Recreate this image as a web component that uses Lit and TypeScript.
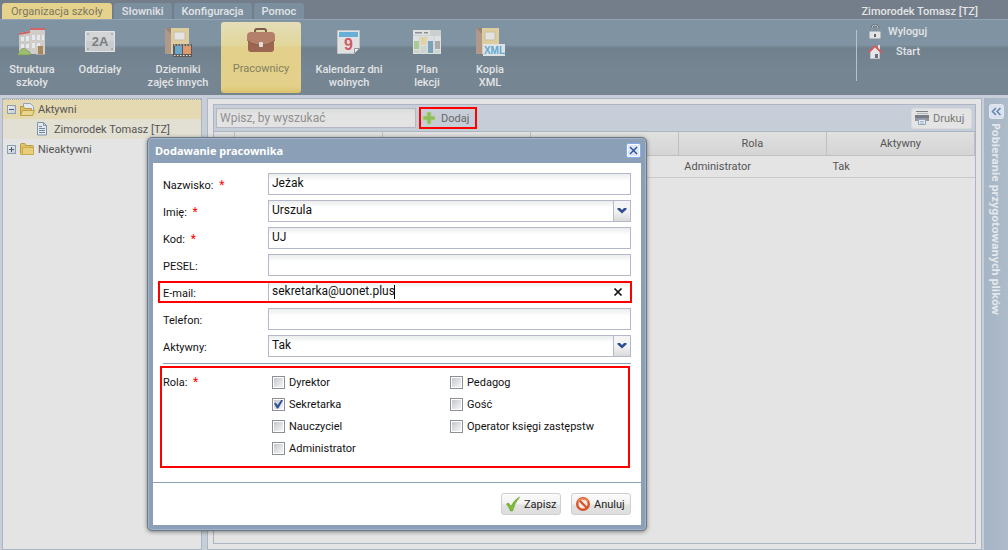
import { LitElement, html, svg, css, nothing } from "lit";
import { customElement, property, state } from "lit/decorators.js";
import { classMap } from "lit/directives/class-map.js";

const icons: Record<string, unknown> = {
  school: svg`<svg width="30" height="30" viewBox="0 0 30 30">
    <path d="M2 6 13 4V27H2Z" fill="#cbc9c4"/><path d="M13 3h15v24H13Z" fill="#d0cdc8"/>
    <path d="M2 6 13 4V6L2 8ZM13 1h15v2H13Z" fill="#cf6469"/>
    <g fill="#e4eaf0"><path d="M4 10h3v4H4zM9 9h3v5H9zM15 8h3v5h-3zM20 8h3v5h-3zM25 8h2v5h-2zM4 17h3v4H4zM9 17h3v4H9zM15 16h3v5h-3zM20 16h3v3h-3z"/></g>
    <path d="M21 19h5v8h-5Z" fill="#a8875f"/><path d="M19 27h9v1h-9Z" fill="#a8a49d"/>
    <path d="M1 28c0-3 2-3 3-5 2-3 6-1 6 1 3 0 4 2 3 4Z" fill="#9dbd70" stroke="#7a9659" stroke-width=".7"/></svg>`,
  plate: svg`<svg width="30" height="30" viewBox="0 0 30 30">
    <path d="M.5 4.500h29v20H.5Z" fill="#d3d5d6" stroke="#e2e4e5"/><path d="M1 14h28v10H1Z" fill="#c9cbcc"/>
    <g fill="#8a8d8f"><circle cx="3" cy="7" r=".8"/><circle cx="27" cy="7" r=".8"/><circle cx="3" cy="22" r=".8"/><circle cx="27" cy="22" r=".8"/></g>
    <text x="15" y="19" text-anchor="middle" font-family="Liberation Sans, sans-serif" font-weight="700" font-size="13" fill="#7c8082">2A</text></svg>`,
  journal: svg`<svg width="30" height="30" viewBox="0 0 30 30">
    <path d="M2 1h6v26H2Z" fill="#9b8578"/><path d="M2 1 8 7V27H2Z" fill="#b0998b"/><path d="M8 1h18v26H8Z" fill="#ddcd9f"/>
    <path d="M11 5h11v8H11Z" fill="#e3e3e3" stroke="#cbbf9f"/>
    <path d="M10 17h19v13H10Z" fill="#5e5a57"/><path d="M12 19h7v8h-7Z" fill="#66a9cd"/><path d="M20 19h8v8h-8Z" fill="#de9a6c"/>
    <path d="M11 18h17M11 28.500h17" stroke="#e2e2e2" stroke-dasharray="1.500 1.500"/></svg>`,
  briefcase: svg`<svg width="30" height="30" viewBox="0 0 30 30">
    <path d="M9 6V4q0-2 2-2h7q2 0 2 2V6" fill="none" stroke="#7d5b4c" stroke-width="2"/>
    <rect x="2" y="6" width="26" height="19" rx="3" fill="#9b6752"/>
    <path d="M1 9q0-4 4-4h20q4 0 4 4v4q-5 5-14 5T1 13Z" fill="#b5806a"/><path d="M1 13q5 5 14 5t14-5" fill="none" stroke="#83523f" stroke-width=".7"/>
    <rect x="13" y="15" width="4" height="5" rx="1" fill="#e0ded9"/></svg>`,
  calendar: svg`<svg width="30" height="30" viewBox="0 0 30 30">
    <path d="M3.500 3.500h22v18l-5 5h-17Z" fill="#e1e1e1" stroke="#c0c4c7"/><path d="M5 5h19v5H5Z" fill="#69aed6"/>
    <path d="M25.500 21.500h-5v5Z" fill="#f0f0f0" stroke="#8b959d"/>
    <text x="14.500" y="23" text-anchor="middle" font-family="Liberation Sans, sans-serif" font-weight="700" font-size="16" fill="#cf5b66">9</text></svg>`,
  plan: svg`<svg width="30" height="30" viewBox="0 0 30 30">
    <path d="M1 3h28v24H1Z" fill="#dfe1e1"/><path d="M3 5h7v1.500H3zM12 5h4v1.500h-4z" fill="#8d8f90"/><path d="M18 3h11v5H18z" fill="#cbd0cf"/>
    <path d="M2 14h5v8H2z" fill="#a8cb93"/><path d="M9 10h5v8H9z" fill="#e4d19b"/><path d="M16 14h5v12h-5z" fill="#7aa3b9"/><path d="M23 14h5v8h-5z" fill="#a9abab"/><path d="M23 23h5v3h-5zM2 23h5v3H2zM9 19h5v7H9z" fill="#cdd5d0"/>
    <path d="M1 8.500h28M8 9v18M15 9v18M22 9v18" stroke="#c4cacb" stroke-width=".7"/></svg>`,
  xml: svg`<svg width="30" height="30" viewBox="0 0 30 30">
    <path d="M1 1h6v26H1Z" fill="#9b8578"/><path d="M1 1 7 7V27H1Z" fill="#b0998b"/><path d="M7 1h17v26H7Z" fill="#ddcd9f"/>
    <path d="M10 5h10v8H10Z" fill="#e3e3e3" stroke="#cbbf9f"/><path d="M8 17h22v12H8Z" fill="#dfe2e4"/>
    <text x="19.500" y="26.500" text-anchor="middle" font-family="Liberation Sans, sans-serif" font-weight="700" font-size="10" fill="#5fa9d4">XML</text></svg>`,
  lock: svg`<svg width="14" height="16" viewBox="0 0 14 16"><path d="M4 8V4a3 3 0 0 1 6 0v4" fill="none" stroke="#5f6d79" stroke-width="2.400"/><path d="M4 8V4a3 3 0 0 1 6 0v4" fill="none" stroke="#bfc5ca"/><rect x="1.500" y="7.500" width="11" height="7" rx="1" fill="#e4e4e4" stroke="#b5bac0"/><path d="M6 10h2v3H6z" fill="#5c6670"/></svg>`,
  home: svg`<svg width="14" height="16" viewBox="0 0 14 16"><path d="M2.500 7.500 7 3l4.500 4.500v7h-9Z" fill="#e6e6e6" stroke="#c2c5c8"/><path d="M10 1h2v5h-2z" fill="#e0e0e0"/><path d="M.5 8.500 7 2l6.500 6.500" fill="none" stroke="#d7595c" stroke-width="1.800"/><path d="M7 10h3v4H7z" fill="#65727d"/></svg>`,
  folderOpen: svg`<svg width="16" height="16" viewBox="0 0 16 16"><path d="M4.500 1.500h7l3 3v6h-10Z" fill="#e3e8ee" stroke="#8da4bc"/><path d="M1.500 4.500h3l1 2h7v7h-11Z" fill="#dcbf68" stroke="#b99a44"/><path d="M3.500 8.500h12l-2 5h-12Z" fill="#e9d68e" stroke="#bf9f47"/></svg>`,
  folder: svg`<svg width="16" height="16" viewBox="0 0 16 16"><path d="M1.500 3.500q0-1 1-1h3q1 0 1 1v1h7q1 0 1 1v7q0 1-1 1h-11q-1 0-1-1Z" fill="#e0c365" stroke="#bb9a42"/><path d="M3.500 6.500h11v7h-11Z" fill="#e6cf78" stroke="#c9aa4d"/></svg>`,
  doc: svg`<svg width="16" height="16" viewBox="0 0 16 16"><path d="M3.500 1.500h6l3 3v9.500h-9Z" fill="#e4e9ee" stroke="#7f93aa"/><path d="M9.500 1.500v3h3" fill="none" stroke="#7f93aa"/><path d="M5 5.500h3M5 7.500h6M5 9.500h6M5 11.500h6" stroke="#6f86a0"/></svg>`,
  plus: svg`<svg width="14" height="14" viewBox="0 0 14 14"><path d="M5 1h4v4h4v4H9v4H5V9H1V5h4Z" fill="#8fbf5a" stroke="#b4d291" stroke-width=".8"/></svg>`,
  printer: svg`<svg width="16" height="16" viewBox="0 0 16 16"><path d="M2 1.500h12" stroke="#7d8388"/><path d="M3 3.500h11" stroke="#b5b9bd"/><path d="M1 5h14v6H1Z" fill="#787d82"/><path d="M1 8h14v3H1Z" fill="#92969b"/><path d="M4.500 9.500h7v5h-7Z" fill="#e6ebf0" stroke="#8fa6bd"/><path d="M6 11.500h4M6 13h4" stroke="#a9bacb"/></svg>`,
  check: svg`<svg width="16" height="16" viewBox="0 0 16 16"><path d="M1.500 8 3.500 7 6 10.500Q9 4 14.500 1 9.500 7 7.500 15H5.500Q4 11 1.500 8Z" fill="#7cbd32" stroke="#5f9e22" stroke-width=".6"/></svg>`,
  ban: svg`<svg width="16" height="16" viewBox="0 0 16 16"><circle cx="8" cy="8" r="5.800" fill="#f4ece6" stroke="#d9542a" stroke-width="2.400"/><path d="M4 4l8 8" stroke="#d9542a" stroke-width="2.400"/><path d="M3 5.500A5.800 5.800 0 0 1 13 5.500" fill="none" stroke="#ef8a5f" stroke-width="1.500"/></svg>`,
  close: svg`<svg width="15" height="15" viewBox="0 0 15 15"><rect x=".5" y=".5" width="14" height="14" rx="2" fill="#dbe8fb" stroke="#84aef0"/><rect x="1.500" y="1.500" width="12" height="12" rx="1" fill="none" stroke="#fff"/><path d="M4 4l7 7M11 4l-7 7" stroke="#2f4d97" stroke-width="1.400"/></svg>`,
  clear: svg`<svg width="10" height="10" viewBox="0 0 10 10"><path d="M1.500 1.500l7 7M8.500 1.500l-7 7" stroke="#111" stroke-width="1.700"/></svg>`,
  chevron: svg`<svg width="16" height="20" viewBox="0 0 16 20"><path d="M3.500 7h2.500l2 2 2-2h2.500v1.500L8 12.500 3.500 8.500Z" fill="#2e5090"/></svg>`,
  expand: svg`<svg width="15" height="15" viewBox="0 0 15 15"><rect x=".5" y=".5" width="14" height="14" rx="2" fill="#d9e2ee" stroke="#e2e7ec"/><path d="M7 4 3.500 7.500 7 11M11.500 4 8 7.500l3.500 3.500" fill="none" stroke="#6484ab" stroke-width="1.500"/></svg>`,
};

const base = css`
  :host { display: block; font: 11px/13px Roboto, "Open Sans", sans-serif; }
  * { box-sizing: border-box; }
  button, input, select { font: inherit; color: inherit; margin: 0; }
  button { border: 0; padding: 0; background: none; cursor: pointer; }
  svg { display: block; flex: none; }
`;

@customElement("ribbon-bar")
class RibbonBar extends LitElement {
  static styles = [base, css`
    :host { color: #e2e4e6; }
    .top { height: 19px; display: flex; align-items: flex-end; gap: 2px; padding: 0 30px 0 2px; background: #737e8a; }
    .tab { height: 16px; padding: 0 8px; border-radius: 3px 3px 0 0; background: #7b8f9f; font-weight: 500; white-space: nowrap; }
    .tab.on { padding: 0 9px; background: #e4d28d; color: #7d7760; font-weight: 400; }
    .user { margin-left: auto; align-self: center; padding-top: 3px; font-weight: 500; white-space: nowrap; }
    .ribbon { display: flex; gap: 3px; padding: 2px 0 2px 2px; height: 76px; border-top: 1px solid #93a3b1; background: linear-gradient(#7f93a2 0 25px, #70808c 28px, #758592 50px, #758592); }
    .item { width: 60px; display: flex; flex-direction: column; align-items: center; gap: 6px; padding-top: 5px; text-align: center; border-radius: 3px; font-weight: 500; }
    .item.w70 { width: 70px; }
    .item.w80 { width: 80px; }
    .item.w90 { width: 90px; }
    .item.on { gap: 5px; color: #84805f; background: linear-gradient(#e4ddb9, #e2d699 24px, #e3d08a 25px, #e3d08a 64px, #ddc36a); font-weight: 400; }
    .sep { margin: 8px 0 12px auto; width: 1px; background: #b9c2ca; }
    .links { width: 148px; display: grid; grid-template-columns: 14px auto; align-content: start; gap: 4px 6px; padding: 2px 0 0 8px; }
    .link { display: contents; color: inherit; text-decoration: none; font-weight: 500; }
    .link span { line-height: 16px; }
    .link.sub span { padding-left: 8px; }
  `];
  items = [
    { icon: "school", a: "Struktura", b: "szkoły", w: 60 },
    { icon: "plate", a: "Oddziały", b: "", w: 70 },
    { icon: "journal", a: "Dzienniki", b: "zajęć innych", w: 80 },
    { icon: "briefcase", a: "Pracownicy", b: "", w: 80, on: true },
    { icon: "calendar", a: "Kalendarz dni", b: "wolnych", w: 90 },
    { icon: "plan", a: "Plan", b: "lekcji", w: 60 },
    { icon: "xml", a: "Kopia", b: "XML", w: 60 },
  ];
  render() {
    return html`
      <nav class="top">
        ${["Organizacja szkoły", "Słowniki", "Konfiguracja", "Pomoc"].map((t, i) => html`<button class=${classMap({ tab: true, on: i === 0 })}>${t}</button>`)}
        <span class="user">Zimorodek Tomasz [TZ]</span>
      </nav>
      <div class="ribbon">
        ${this.items.map((i) => html`<button class=${classMap({ item: true, on: !!i.on, [`w${i.w}`]: true })}>${icons[i.icon]}<span>${i.a}${i.b ? html`<br />${i.b}` : nothing}</span></button>`)}
        <span class="sep"></span>
        <div class="links">
          <a class="link" href="#">${icons.lock}<span>Wyloguj</span></a>
          <a class="link sub" href="#">${icons.home}<span>Start</span></a>
        </div>
      </div>`;
  }
}

@customElement("staff-tree")
class StaffTree extends LitElement {
  static styles = [base, css`
    :host { border: 1px solid #aab6c3; background: #e4e4e4; color: #555; }
    ul { list-style: none; margin: 0; padding: 0; }
    .row { height: 20px; display: flex; align-items: center; gap: 3px; padding-left: 4px; }
    .row.sel { background: #e4d9b0; border-top: 1px dotted #aaa; }
    .row.child { background: #e2e0d3; padding-left: 31px; gap: 4px; }
    .box { width: 9px; height: 9px; border: 1px solid #8d9db4; background: linear-gradient(135deg, #eee, #c8ccd2); display: grid; place-items: center; }
    .box i { grid-area: 1 / 1; width: 5px; height: 1px; background: #4a5a78; }
    .box i.v { width: 1px; height: 5px; }
  `];
  render() {
    return html`<ul>
      <li><div class="row sel"><button class="box" aria-label="Aktywni"><i></i></button>${icons.folderOpen}<span>Aktywni</span></div>
        <ul><li class="row child">${icons.doc}<span>Zimorodek Tomasz [TZ]</span></li></ul></li>
      <li class="row"><button class="box" aria-label="Nieaktywni"><i></i><i class="v"></i></button>${icons.folder}<span>Nieaktywni</span></li>
    </ul>`;
  }
}

@customElement("staff-grid")
class StaffGrid extends LitElement {
  static styles = [base, css`
    :host { border: 1px solid #aab6c3; background: #e4e4e4; padding: 5px; color: #555; display: flex; }
    .panel { flex: 1; border: 1px solid #aab6c3; }
    .bar { display: flex; align-items: center; height: 27px; gap: 3px; padding: 0 3px 0 2px; background: linear-gradient(#c9ced9, #c5cdd7); border-bottom: 1px solid #aab6c3; }
    .search { width: 200px; height: 20px; border: 1px solid #b4b9c2; background: linear-gradient(#dadddd, #e3e3e3 6px); padding: 0 3px; font-size: 12px; }
    .search::placeholder { color: #8f8f8f; opacity: 1; }
    .add { display: flex; align-items: center; gap: 5px; height: 22px; width: 58px; padding: 0 1px; border: 2px solid #f00; color: #666; }
    .print { margin-left: auto; display: flex; align-items: center; gap: 3px; height: 21px; width: 61px; padding: 0 2px; border: 1px solid #d8dadc; border-radius: 3px; background: #e4e4e4; color: #777; }
    table { width: 100%; table-layout: fixed; border-collapse: collapse; }
    th { height: 23px; padding: 0; font-weight: 400; border-right: 1px solid #bfbfbf; border-bottom: 1px solid #bfbfbf; background: linear-gradient(#e0e0e0, #d4d4d4); }
    td { height: 22px; padding: 0 6px; border-bottom: 1px solid #c8c8c8; }
    .num { width: 20px; }
  `];
  render() {
    return html`<section class="panel">
      <div class="bar">
        <input class="search" type="search" placeholder="Wpisz, by wyszukać" aria-label="Wpisz, by wyszukać" />
        <button class="add">${icons.plus}Dodaj</button>
        <button class="print">${icons.printer}Drukuj</button>
      </div>
      <table>
        <thead><tr><th class="num"></th><th></th><th></th><th></th><th>Rola</th><th>Aktywny</th></tr></thead>
        <tbody><tr><td></td><td></td><td></td><td></td><td>Administrator</td><td>Tak</td></tr></tbody>
      </table>
    </section>`;
  }
}

@customElement("staff-dialog")
class StaffDialog extends LitElement {
  static styles = [base, css`
    :host { width: 500px; border: 1px solid #6c7885; border-radius: 5px; background: #8ba0b6; padding: 0 5px 5px; box-shadow: 0 1px 4px rgba(0, 0, 0, .45), inset 0 0 0 1px #a3b5c8; color: #111; }
    .title { display: flex; align-items: center; justify-content: space-between; height: 25px; padding: 0 0 1px 2px; color: #fff; font: 700 11px/15px "Noto Sans", sans-serif; }
    h2 { margin: 0; font: inherit; }
    form { background: #fff; }
    .fields { padding: 10px 9px 0 5px; display: grid; gap: 5px; }
    .field { display: flex; align-items: center; height: 22px; padding: 0 1px 0 5px; position: relative; }
    .field > label { width: 105px; padding-top: 2px; }
    .field.mark::after { content: ""; position: absolute; inset: 0; border: 2px solid #f00; pointer-events: none; }
    .req { color: #f00; margin-left: 3px; font-size: 12px; }
    .control { flex: 1; position: relative; display: flex; height: 22px; border: 1px solid #b5b8c8; background: linear-gradient(#eaeeed, #fff 7px); }
    .text { flex: 1; min-width: 0; border: 0; outline: 0; padding: 0 3px 2px; background: none; font-size: 12px; line-height: 16px; appearance: none; }
    .arrow { width: 17px; border-left: 1px solid #b5b8c8; background: linear-gradient(#f4f4f4 50%, #dadada); pointer-events: none; }
    .combo .text { margin-right: -17px; padding-right: 20px; }
    .caret { position: absolute; left: 125px; top: 3px; width: 1px; height: 14px; background: #000; }
    .clear { width: 24px; display: grid; place-items: center; }
    hr { margin: 6px 10px 2px; border: 0; border-top: 1px solid #8ba0b6; }
    fieldset { margin: 0 11px 14px 7px; border: 2px solid #f00; height: 102px; padding: 5px 0 0 1px; display: grid; grid-template-columns: 109px 178px 1fr; align-items: start; min-width: 0; }
    .legend { line-height: 18px; }
    .roles { display: grid; gap: 4px; }
    .role { display: flex; align-items: center; height: 18px; gap: 4px; }
    .tick { appearance: none; width: 13px; height: 13px; border: 1px solid #8c8f94; background: linear-gradient(135deg, #c3c8ce, #f6f6f6) content-box, #fff; padding: 1px; display: grid; place-items: center; }
    .tick:checked::after { content: ""; width: 9px; height: 9px; background: #34549c; clip-path: polygon(0 45%, 22% 35%, 40% 60%, 82% 0, 100% 8%, 48% 100%, 32% 100%); }
    footer { display: flex; justify-content: flex-end; gap: 10px; padding: 10px; border-top: 1px solid #8ba0b6; }
    .btn { display: flex; align-items: center; gap: 3px; height: 22px; width: 60px; padding: 0 3px; border: 1px solid #cfcfcf; border-radius: 3px; background: linear-gradient(#fbfbfb, #f1f1f1 50%, #e2e2e2 55%, #dedede); color: #222; white-space: nowrap; }
  `];
  @state() fields = [
    { id: "surname", label: "Nazwisko:", req: true, value: "Jeżak" },
    { id: "name", label: "Imię:", req: true, value: "Urszula", combo: true },
    { id: "code", label: "Kod:", req: true, value: "UJ" },
    { id: "pesel", label: "PESEL:", value: "" },
    { id: "email", label: "E-mail:", value: "sekretarka@uonet.plus", mark: true },
    { id: "phone", label: "Telefon:", value: "" },
    { id: "active", label: "Aktywny:", value: "Tak", combo: true },
  ];
  @property({ attribute: false }) roles = [["Dyrektor", "Sekretarka", "Nauczyciel", "Administrator"], ["Pedagog", "Gość", "Operator księgi zastępstw"]];
  star = html`<span class="req">*</span>`;
  render() {
    return html`
      <div class="title"><h2>Dodawanie pracownika</h2><button aria-label="Zamknij">${icons.close}</button></div>
      <form @submit=${(e: Event) => e.preventDefault()}>
        <div class="fields">${this.fields.map((f) => html`
          <div class=${classMap({ field: true, mark: !!f.mark })}>
            <label for=${f.id}>${f.label} ${f.req ? this.star : nothing}</label>
            <div class=${classMap({ control: true, combo: !!f.combo })}>
              ${f.combo
                ? html`<select class="text" id=${f.id}><option>${f.value}</option></select><span class="arrow">${icons.chevron}</span>`
                : html`<input class="text" id=${f.id} .value=${f.value} />`}
              ${f.mark ? html`<span class="caret"></span><button type="button" class="clear" aria-label="Wyczyść">${icons.clear}</button>` : nothing}
            </div>
          </div>`)}
        </div>
        <hr />
        <fieldset aria-labelledby="role-label">
          <span class="legend" id="role-label">Rola: ${this.star}</span>
          ${this.roles.map((col) => html`<div class="roles">${col.map((r) => html`
            <label class="role"><input class="tick" type="checkbox" .checked=${r === "Sekretarka"} />${r}</label>`)}</div>`)}
        </fieldset>
        <footer>
          <button class="btn">${icons.check}Zapisz</button>
          <button type="button" class="btn">${icons.ban}Anuluj</button>
        </footer>
      </form>`;
  }
}

@customElement("app-root")
class AppRoot extends LitElement {
  static styles = [base, css`
    :host { position: relative; display: flex; flex-direction: column; min-height: 100vh; background: #c7ced7; }
    main { flex: 1; display: grid; grid-template-columns: 200px 1fr 24px; padding: 3px 0 0 2px; }
    staff-grid { margin: 0 2px 0 5px; }
    .side { display: flex; flex-direction: column; align-items: center; gap: 4px; padding-top: 6px; background: linear-gradient(90deg, #a5b5c5, #aebbc9); color: #e4e8ec; }
    .side span { writing-mode: vertical-rl; font: 700 11px/14px "Noto Sans", sans-serif; }
    staff-dialog { position: absolute; left: 147px; top: 137px; }
  `];
  render() {
    return html`
      <ribbon-bar></ribbon-bar>
      <main>
        <staff-tree></staff-tree>
        <staff-grid></staff-grid>
        <aside class="side"><button aria-label="Rozwiń">${icons.expand}</button><span>Pobieranie przygotowanych plików</span></aside>
      </main>
      <staff-dialog role="dialog"></staff-dialog>`;
  }
}
